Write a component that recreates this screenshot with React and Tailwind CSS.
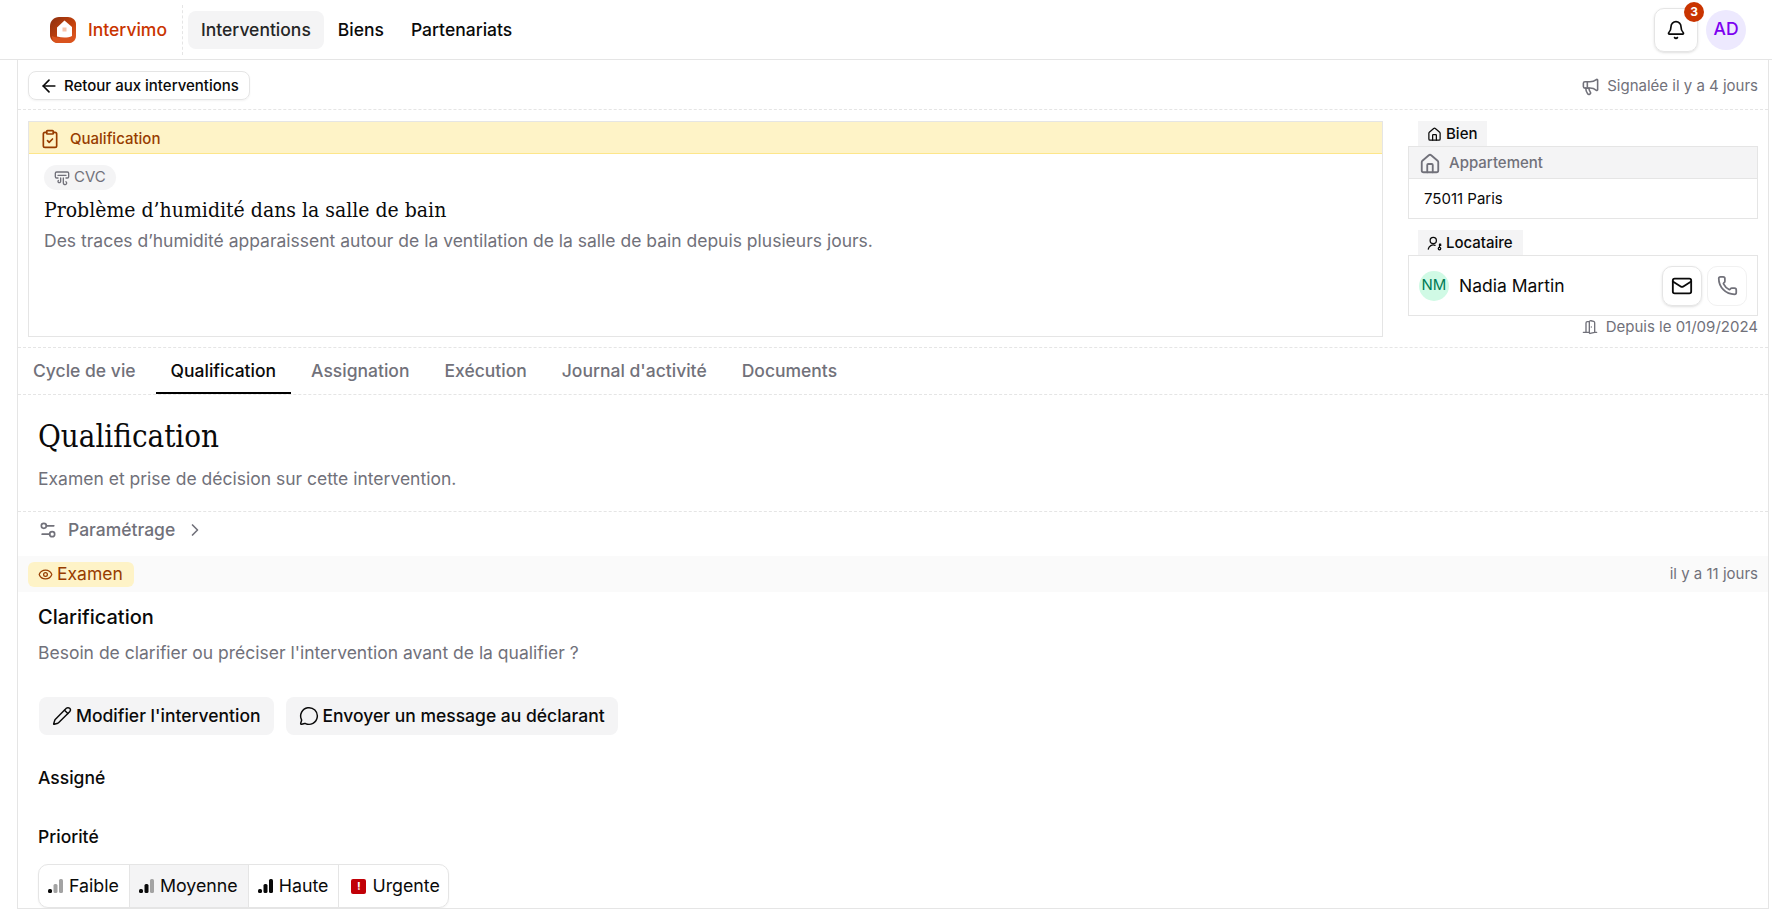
import React from 'react';
import {
  ArrowLeft, Bell, Megaphone, ClipboardCheck, AirVent, House, Mail, Phone,
  DoorOpen, Settings2, ChevronRight, Eye, Pencil, MessageCircle,
} from 'lucide-react';

const serif = "font-['DejaVu_Serif_Condensed','Liberation_Serif',serif]";

// Logo dessiné à la main
function Logo() {
  return (
    <svg width="26" height="26" viewBox="0 0 26 26" className="shrink-0">
      <defs>
        <linearGradient id="ring" x1="0" y1="0" x2="1" y2="1">
          <stop offset="0" stopColor="#8a2f10" />
          <stop offset="0.55" stopColor="#c2410c" />
          <stop offset="1" stopColor="#e8622a" />
        </linearGradient>
      </defs>
      <path d="M9 0h9c4 0 8 3 8 7v12c0 4-3 7-7 7H8c-5 0-8-4-8-8V9c0-5 4-9 9-9z" fill="url(#ring)" />
      <path d="M2 19c4 2 10 2 14 1l9-3v3c-1 4-3 6-7 6H7c-3 0-5-3-5-7z" fill="#d9531e" />
      <path d="M7 19.500V10.500L14.500 3.500L22 10V19c-4 2-10 2-15 .500z" fill="#fff" />
      <rect x="12.500" y="10.500" width="4" height="4" fill="#f8c4ab" />
    </svg>
  );
}

function UserKeyIcon({ size = 14 }) {
  return (
    <svg width={size} height={size} viewBox="0 0 24 24" fill="none" stroke="currentColor" strokeWidth="2" strokeLinecap="round" strokeLinejoin="round">
      <circle cx="10" cy="7" r="5" />
      <path d="M2 21a8 8 0 0 1 11-6" />
      <circle cx="20" cy="20" r="2" />
      <path d="M20 18v-5l2 0M20 15h2" />
    </svg>
  );
}

function SignalIcon({ level }) {
  const bars = [
    { x: 0, h: 4 },
    { x: 5.5, h: 9 },
    { x: 11, h: 14 },
  ];
  return (
    <svg width="15" height="14" viewBox="0 0 15 14" className="shrink-0">
      {bars.map((b, i) => (
        <rect
          key={i}
          x={b.x}
          y={14 - b.h}
          width="4"
          height={b.h}
          rx="1.500"
          fill={i < level ? '#0a0a0a' : '#a3a3a3'}
        />
      ))}
    </svg>
  );
}

function UrgentIcon() {
  return (
    <div className="ml-[3px] w-[15px] h-[15px] rounded-[2px] bg-[#c10007] flex items-center justify-center text-white text-[11px] font-bold leading-none shrink-0">
      !
    </div>
  );
}

function Tab({ children, active }) {
  return (
    <div
      className={`px-[15px] pt-[2px] h-[46px] flex items-center text-[17.5px] font-[450] border-b-2 ${
        active ? 'border-black text-[#0a0a0a]' : 'border-transparent text-[#71717a]'
      }`}
    >
      {children}
    </div>
  );
}

function TitleTag({ icon: Icon, children }) {
  return (
    <div className="ml-[10px] self-start h-[25px] pt-[1px] pl-[9px] pr-[10px] bg-[#f4f4f5] flex items-center gap-[4px] text-[15px] font-[450] text-[#0a0a0a]">
      <Icon size={15} />
      {children}
    </div>
  );
}

function ActionButton({ icon: Icon, children }) {
  return (
    <button className="h-[38px] px-[13px] flex items-center gap-[4px] rounded-lg bg-[#f4f4f5] text-[17.5px] font-[450] text-[#0a0a0a]">
      <Icon size={20} strokeWidth={1.75} />
      {children}
    </button>
  );
}

function PriorityItem({ icon, children, active, last }) {
  return (
    <div
      className={`h-full flex items-center gap-[6px] pl-[9px] text-[17.8px] text-[#0a0a0a] ${
        last ? 'pr-[8px]' : 'pr-[10px] border-r border-[#e5e5e5]'
      } ${active ? 'bg-[#f4f4f5]' : ''}`}
    >
      {icon}
      {children}
    </div>
  );
}

export default function App() {
  return (
    <div className="h-[917px] overflow-hidden bg-white flex flex-col font-['Inter',sans-serif] text-[#0a0a0a]">
      {/* Barre du haut */}
      <header className="h-[60px] shrink-0 border-b border-[#e5e5e5] flex items-center pl-[50px] pr-[26px]">
        <div className="flex items-center gap-[12px] h-full">
          <Logo />
          <span className="pt-[1px] text-[17.5px] font-[450] text-[#c93400]">Intervimo</span>
        </div>
        <div className="ml-[15px] h-[50px] border-l border-dashed border-[#e5e5e5]" />
        <nav className="ml-[5px] flex items-center gap-[1px]">
          <div className="h-[38px] px-[13px] pt-[1px] rounded-lg bg-[#f4f4f5] flex items-center text-[17.5px] font-[450] text-[#262626]">Interventions</div>
          <div className="h-[38px] px-[13px] pt-[1px] flex items-center text-[17.5px] font-[450]">Biens</div>
          <div className="h-[38px] px-[13px] pt-[1px] flex items-center text-[17.5px] font-[450]">Partenariats</div>
        </nav>
        <div className="ml-auto flex items-center gap-[8px]">
          <div className="relative w-[44px] h-[44px] rounded-[10px] border border-[#e5e5e5] shadow-sm flex items-center justify-center">
            <Bell size={20} />
            <span className="absolute top-[-7px] right-[-7px] w-[20px] h-[20px] rounded-full bg-[#c93400] text-white text-[12px] font-bold flex items-center justify-center">3</span>
          </div>
          <div className="w-[40px] h-[40px] rounded-full bg-[#ede9fe] text-[#7c00f0] text-[17.5px] font-medium flex items-center justify-center">AD</div>
        </div>
      </header>

      <main className="flex-1 ml-[17px] mr-[3px] border-x border-b border-[#e5e5e5] min-h-0 overflow-hidden mb-[8px]">
        {/* Retour + signalement */}
        <div className="h-[50px] pt-[2px] flex items-center justify-between pl-[10px] pr-[10px] border-b border-dashed border-[#e5e5e5]">
          <button className="h-[29px] pt-[1px] px-[10px] flex items-center gap-[5px] rounded-lg border border-[#e5e5e5] shadow-xs text-[15px] font-[450]">
            <ArrowLeft size={20} />
            Retour aux interventions
          </button>
          <div className="pt-[1px] flex items-center gap-[7px] text-[15px] text-[#71717a]">
            <Megaphone size={19} />
            Signalée il y a 4 jours
          </div>
        </div>

        {/* Résumé */}
        <div className="h-[238px] flex pl-[10px] pr-[10px] border-b border-dashed border-[#e5e5e5] pt-[11px]">
          <section className="w-[1355px] h-[216px] border border-[#e5e5e5] shrink-0">
            <div className="h-[32px] pt-[3px] bg-[#fef3c7] border-b border-[#fde68a] flex items-center gap-[10px] pl-[11px] text-[15px] font-[450] text-[#973c00]">
              <ClipboardCheck size={20} />
              Qualification
            </div>
            <div className="pl-[15px] pt-[11px]">
              <span className="inline-flex items-center gap-[4px] h-[25px] px-[10px] rounded-full bg-[#f4f4f5] text-[15px] text-[#71717a]">
                <AirVent size={16} />
                CVC
              </span>
              <h2 className={`${serif} mt-[4px] text-[21px] leading-[28px]`}>Problème d’humidité dans la salle de bain</h2>
              <p className="mt-[5px] text-[17.5px] leading-[24px] text-[#71717a]">Des traces d’humidité apparaissent autour de la ventilation de la salle de bain depuis plusieurs jours.</p>
            </div>
          </section>
          <aside className="ml-[25px] flex-1 flex flex-col min-w-0">
            <TitleTag icon={House}>Bien</TitleTag>
            <div className="border border-[#e5e5e5]">
              <div className="h-[32px] pt-[2px] bg-[#f4f4f5] border-b border-[#e5e5e5] flex items-center gap-[8px] pl-[10px] text-[15px] font-[450] text-[#71717a]">
                <House size={22} />
                Appartement
              </div>
              <div className="h-[39px] pt-[2px] flex items-center pl-[15px] text-[15px]">75011 Paris</div>
            </div>
            <div className="mt-[11px] self-start flex">
              <TitleTag icon={UserKeyIcon}>Locataire</TitleTag>
            </div>
            <div className="h-[61px] border border-[#e5e5e5] flex items-center pl-[10px] pr-[10px]">
              <div className="w-[30px] h-[30px] rounded-full bg-[#d0fae5] text-[#007a55] text-[15px] flex items-center justify-center">NM</div>
              <span className="ml-[10px] pt-[1px] text-[17.5px]">Nadia Martin</span>
              <div className="ml-auto flex items-center gap-[5px]">
                <div className="w-[40px] h-[40px] rounded-[10px] border border-[#e5e5e5] shadow-sm flex items-center justify-center">
                  <Mail size={22} />
                </div>
                <div className="w-[40px] h-[40px] rounded-[10px] border border-[#f1f1f1] flex items-center justify-center text-[#71717a]">
                  <Phone size={21} />
                </div>
              </div>
            </div>
            <div className="mt-[1px] flex items-center justify-end gap-[8px] text-[15px] leading-[20px] text-[#71717a]">
              <DoorOpen size={16} />
              Depuis le 01/09/2024
            </div>
          </aside>
        </div>

        {/* Onglets */}
        <div className="flex gap-[5px] h-[47px] items-end border-b border-dashed border-[#e5e5e5]">
          <Tab>Cycle de vie</Tab>
          <Tab active>Qualification</Tab>
          <Tab>Assignation</Tab>
          <Tab>Exécution</Tab>
          <Tab>Journal d'activité</Tab>
          <Tab>Documents</Tab>
        </div>

        {/* Titre de section */}
        <div className="h-[117px] pl-[20px] pt-[19px] border-b border-dashed border-[#e5e5e5]">
          <h1 className={`${serif} text-[31px] leading-[44px]`}>Qualification</h1>
          <p className="mt-[9px] text-[17.5px] leading-[24px] text-[#71717a]">Examen et prise de décision sur cette intervention.</p>
        </div>

        <div className="h-[44px] pb-[8px] pl-[20px] flex items-center text-[#71717a] text-[17.5px] font-[450]">
          <Settings2 size={20} />
          <span className="ml-[10px]">Paramétrage</span>
          <ChevronRight size={20} className="ml-[10px]" />
        </div>

        {/* Examen */}
        <div className="h-[36px] bg-[#fafafa] flex items-center justify-between pl-[10px] pr-[10px]">
          <span className="h-[25px] pt-[1px] pl-[10px] pr-[11px] rounded-md bg-[#fef3c7] text-[#973c00] text-[17.5px] flex items-center gap-[4px]">
            <Eye size={15} />
            Examen
          </span>
          <span className="text-[15px] text-[#71717a]">il y a 11 jours</span>
        </div>

        <div className="pl-[20px] pt-[11px]">
          <h3 className="text-[20px] leading-[28px] font-[450]">Clarification</h3>
          <p className="mt-[10px] text-[17.5px] leading-[24px] text-[#71717a]">Besoin de clarifier ou préciser l'intervention avant de la qualifier ?</p>
          <div className="mt-[32px] flex gap-[12px] pl-[1px]">
            <ActionButton icon={Pencil}>Modifier l'intervention</ActionButton>
            <ActionButton icon={MessageCircle}>Envoyer un message au déclarant</ActionButton>
          </div>
          <div className="mt-[31px] text-[17.5px] leading-[24px] font-[450]">Assigné</div>
          <div className="mt-[35px] text-[17.5px] leading-[24px] font-[450]">Priorité</div>
          <div className="mt-[15px] inline-flex items-center h-[44px] border border-[#e5e5e5] rounded-[10px] overflow-hidden shadow-xs">
            <PriorityItem icon={<SignalIcon level={1} />}>Faible</PriorityItem>
            <PriorityItem icon={<SignalIcon level={2} />} active>Moyenne</PriorityItem>
            <PriorityItem icon={<SignalIcon level={3} />}>Haute</PriorityItem>
            <PriorityItem icon={<UrgentIcon />} last>Urgente</PriorityItem>
          </div>
        </div>
      </main>
    </div>
  );
}
